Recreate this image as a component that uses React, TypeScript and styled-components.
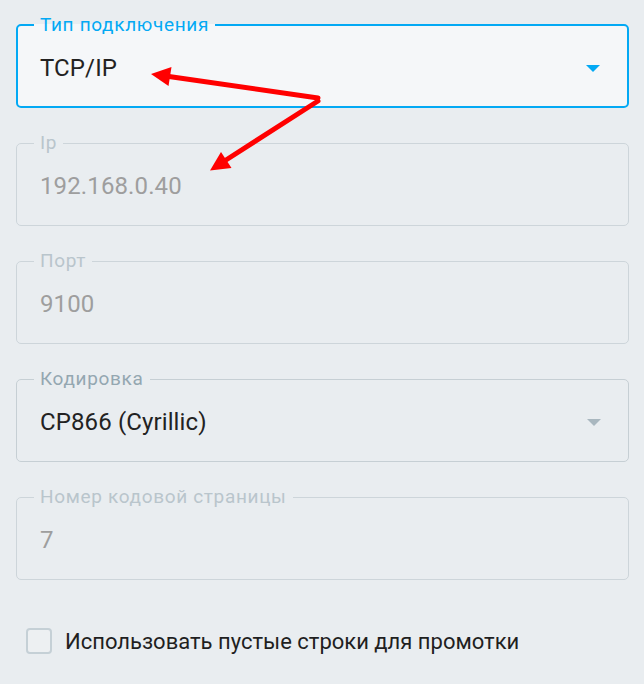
import React from 'react'
import styled, { createGlobalStyle, css } from 'styled-components'

const GlobalStyle = createGlobalStyle`
  html, body {
    margin: 0;
    padding: 0;
    background: #e9edf0;
    font-family: Roboto, 'Noto Sans', sans-serif;
  }
`

const Page = styled.div`
  position: relative;
  width: 644px;
  height: 684px;
  box-sizing: border-box;
  padding: 16px 15px 0 16px;
  overflow: hidden;
`

const Form = styled.div`
  display: flex;
  flex-direction: column;
  gap: 26px;
`

type FieldProps = { $focused?: boolean; $disabled?: boolean }

const Outline = styled.fieldset<FieldProps>`
  margin: 0;
  min-width: 0;
  border-radius: 5px;
  border: 1px solid ${(p) => (p.$disabled ? '#cdd5da' : '#c6cfd4')};
  padding: 0 16px 25px 17px;
  background: transparent;

  ${(p) =>
    p.$focused &&
    css`
      border: 2px solid #03a9f4;
      padding: 0 16px 24px 16px;
      background: #f5f7f9;
    `}
`

const Label = styled.legend<FieldProps>`
  padding: 0 6px;
  font-size: 19px;
  line-height: 18px;
  letter-spacing: 0.035em;
  color: ${(p) => (p.$focused ? '#03a9f4' : p.$disabled ? '#b9c5cc' : '#94a7b1')};
`

const Row = styled.div`
  display: flex;
  align-items: center;
  padding: 20px 6px 0 6px;
  height: 28px;
`

const Value = styled.div<FieldProps>`
  flex: 1;
  font-size: 24px;
  line-height: 28px;
  letter-spacing: 0.005em;
  color: ${(p) => (p.$disabled ? '#9e9e9e' : '#222222')};
`

const Caret = styled.span<{ $color: string }>`
  width: 0;
  height: 0;
  margin-right: 5px;
  border-left: 7px solid transparent;
  border-right: 7px solid transparent;
  border-top: 7px solid ${(p) => p.$color};
`

const CheckRow = styled.label`
  display: flex;
  align-items: center;
  gap: 13px;
  margin-top: 48px;
  padding-left: 10px;
  font-size: 22px;
  color: #1f1f1f;
`

const Box = styled.span`
  width: 26px;
  height: 26px;
  box-sizing: border-box;
  border: 2px solid #c5d0d6;
  border-radius: 4px;
  background: #edf0f2;
`

const Overlay = styled.svg`
  position: absolute;
  left: 0;
  top: 0;
  pointer-events: none;
`

type FieldDef = {
  label: string
  value: string
  focused?: boolean
  disabled?: boolean
  select?: boolean
}

const fields: FieldDef[] = [
  { label: 'Тип подключения', value: 'TCP/IP', focused: true, select: true },
  { label: 'Ip', value: '192.168.0.40', disabled: true },
  { label: 'Порт', value: '9100', disabled: true },
  { label: 'Кодировка', value: 'CP866 (Cyrillic)', select: true },
  { label: 'Номер кодовой страницы', value: '7', disabled: true },
]

function Field({ f }: { f: FieldDef }) {
  return (
    <Outline $focused={f.focused} $disabled={f.disabled}>
      <Label $focused={f.focused} $disabled={f.disabled}>
        {f.label}
      </Label>
      <Row>
        <Value $disabled={f.disabled}>{f.value}</Value>
        {f.select && <Caret $color={f.focused ? '#03a9f4' : '#a9b7bf'} />}
      </Row>
    </Outline>
  )
}

export default function App() {
  return (
    <Page>
      <GlobalStyle />
      <Form>
        {fields.map((f) => (
          <Field key={f.label} f={f} />
        ))}
      </Form>
      <CheckRow>
        <Box />
        Использовать пустые строки для промотки
      </CheckRow>
      <Overlay width="644" height="684" viewBox="0 0 644 684">
        <g stroke="#ff0000" strokeWidth="5" strokeLinecap="round" fill="#ff0000">
          <line x1="318" y1="98" x2="169" y2="76.5" />
          <line x1="318" y1="101" x2="226" y2="160" />
        </g>
        <g fill="#ff0000">
          <polygon points="151,74 171.5,67 168.5,86" />
          <polygon points="210,170.5 231.5,168 221,152" />
        </g>
      </Overlay>
    </Page>
  )
}
